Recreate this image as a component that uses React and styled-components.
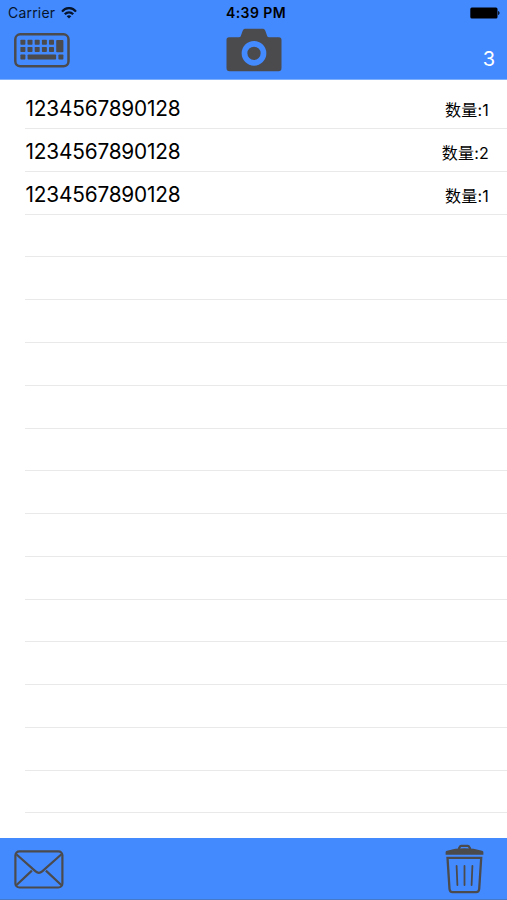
import React from "react";
import styled, { createGlobalStyle } from "styled-components";

const INK = "#4b4b4d";
const BLUE = "#448aff";

const GlobalStyle = createGlobalStyle`
  * { box-sizing: border-box; }
  body { margin: 0; background: #fff; }
`;

const Screen = styled.div`
  display: flex;
  flex-direction: column;
  width: 507px;
  height: 900px;
  overflow: hidden;
  background: #fff;
  font-family: Inter, "Noto Sans CJK SC", sans-serif;
  color: #000;
`;

const Header = styled.header`
  flex: none;
  height: 80px;
  background: ${BLUE};
  border-bottom: 1px solid #7fb0fb;
`;

const StatusBar = styled.div`
  display: grid;
  grid-template-columns: 1fr auto 1fr;
  align-items: center;
  height: 26px;
  padding: 0 7px 0 8px;
  line-height: 26px;
`;

const Carrier = styled.div`
  display: flex;
  align-items: center;
  gap: 6px;
  font-size: 14px;
  letter-spacing: 0.2px;
  color: #06152c;
`;

const Clock = styled.div`
  font-size: 14px;
  font-weight: 600;
  letter-spacing: 0.4px;
  padding-left: 4px;
`;

const Battery = styled.svg`
  justify-self: end;
`;

const Toolbar = styled.div`
  display: grid;
  grid-template-columns: 1fr auto 1fr;
  align-items: start;
  height: 53px;
  padding: 0 12px 0 14px;
`;

const IconButton = styled.button`
  display: flex;
  justify-self: start;
  margin: ${(p) => p.$top}px 0 0;
  padding: 0;
  border: 0;
  background: none;
  color: ${INK};
`;

const CameraButton = styled(IconButton)`
  margin-left: -2px;
`;

const Total = styled.div`
  justify-self: end;
  margin-top: 21px;
  font-size: 20px;
  line-height: 24px;
  color: #fff;
`;

const List = styled.ul`
  flex: 1;
  min-height: 0;
  margin: 0;
  padding: 6.4px 0 0 25px;
  list-style: none;
  overflow: hidden;
`;

const Row = styled.li`
  display: flex;
  align-items: center;
  justify-content: space-between;
  height: 42.77px;
  padding: 4px 18px 0 0.5px;
  border-bottom: 1px solid #e9e9ea;
`;

const Code = styled.span`
  font-size: 20.8px;
  line-height: 24px;
  letter-spacing: -0.18px;
`;

const Quantity = styled.span`
  font-size: 16px;
  line-height: 24px;
  padding-top: 2px;
  letter-spacing: 0.2px;
`;

const Footer = styled.footer`
  display: flex;
  flex: none;
  align-items: flex-start;
  justify-content: space-between;
  height: 62px;
  padding: 0 23px 0 14px;
  background: ${BLUE};
  border-bottom: 1px solid #4779c9;
`;

const items = [
  { code: "1234567890128", quantity: 1 },
  { code: "1234567890128", quantity: 2 },
  { code: "1234567890128", quantity: 1 },
];

const emptyRows = Array.from({ length: 14 }, (_, i) => i);

const keyRows = [6.7, 13.9];
const keyColumns = [6.4, 13.5, 20.7, 27.9, 35];

function WifiIcon() {
  return (
    <svg width="16" height="12" viewBox="0 0 16 12" fill="none" stroke="#06152c" strokeWidth="2.2">
      <path d="M1 4.6C5-.1 11-.1 15 4.6" />
      <path d="M3.8 7.3c2.4-2.7 6-2.7 8.4 0" />
      <path d="M8 11.6 5.7 9.3c1.3-1.3 3.3-1.3 4.6 0Z" fill="#06152c" stroke="none" />
    </svg>
  );
}

function KeyboardIcon() {
  return (
    <svg width="56" height="35" viewBox="0 0 56 35" fill="currentColor">
      <rect x="1.3" y="1.3" width="53.2" height="32" rx="5" fill="none" stroke="currentColor" strokeWidth="2.5" />
      {keyRows.map((y) =>
        keyColumns.map((x) => <rect key={`${x}-${y}`} x={x} y={y} width="5" height="5" rx="0.7" />)
      )}
      <rect x="42.2" y="7" width="7.2" height="12.3" rx="0.8" />
      <rect x="6.4" y="21.5" width="5" height="5" rx="0.7" />
      <rect x="13.6" y="21.5" width="28.5" height="5" rx="0.7" />
      <rect x="44.4" y="21.5" width="5" height="5" rx="0.7" />
    </svg>
  );
}

function CameraIcon() {
  return (
    <svg width="56" height="44" viewBox="0 0 56 44" fill="currentColor">
      <path d="M3 9.3h10.2c1 0 1.4-.6 1.8-1.7l1.4-4.2C17.2 1.2 18.1.7 20 .7h16c1.9 0 2.8.5 3.6 2.7L41 7.6c.4 1.1.8 1.7 1.8 1.7H53c1.7 0 2.5.9 2.5 2.5V40c0 2.1-1 3.2-3 3.2h-49c-2 0-3-1.1-3-3.2V11.8c0-1.6.8-2.5 2.5-2.5Z" />
      <circle cx="28" cy="25.3" r="9.5" fill="none" stroke={BLUE} strokeWidth="5.7" />
    </svg>
  );
}

function MailIcon() {
  return (
    <svg width="50" height="39" viewBox="0 0 50 39" fill="none" stroke="currentColor" strokeWidth="2.2" strokeLinejoin="round">
      <rect x="1.4" y="1.3" width="47" height="36.2" rx="4" />
      <path d="m2.3 4.2 19.3 17.2c2.4 2.1 4.2 2.1 6.6 0L47.5 4.2M2.3 35.3l15.6-14.7M47.5 35.3 31.9 20.6" />
    </svg>
  );
}

function TrashIcon() {
  return (
    <svg width="39" height="50" viewBox="0 0 39 50" fill="none" stroke="currentColor" strokeLinecap="round" strokeLinejoin="round">
      <path d="M14 4.5 14.7 3c.3-.7.8-1.1 1.5-1.1h6.6c.7 0 1.2.4 1.5 1.1l.7 1.5" strokeWidth="2.3" />
      <path d="M.6 10.7V8.4c0-1 .5-1.5 1.4-1.7C12.5 3.4 26.5 3.4 37 6.7c.9.2 1.4.7 1.4 1.7v2.3Z" fill="currentColor" stroke="none" />
      <path d="M2.5 13.8h33.7l-2 31.2c-.2 2.2-1 3.2-3 3.2H7.5c-2 0-2.8-1-3-3.2Z" strokeWidth="2.3" strokeLinejoin="miter" />
      <path d="m11.6 22 .8 19M19.5 22v19M27.4 22l-.8 19" strokeWidth="1.8" />
    </svg>
  );
}

export default function App() {
  return (
    <Screen>
      <GlobalStyle />
      <Header>
        <StatusBar>
          <Carrier>
            Carrier
            <WifiIcon />
          </Carrier>
          <Clock>4:39 PM</Clock>
          <Battery width="30" height="12" viewBox="0 0 30 12">
            <rect x="0.3" y="0.5" width="27.2" height="11" rx="1.5" />
            <path d="M28.2 4c1.7.3 1.7 3.7 0 4Z" />
          </Battery>
        </StatusBar>
        <Toolbar>
          <IconButton $top={7} aria-label="Keyboard"><KeyboardIcon /></IconButton>
          <CameraButton $top={2} aria-label="Camera"><CameraIcon /></CameraButton>
          <Total>3</Total>
        </Toolbar>
      </Header>
      <List>
        {items.map((item, index) => (
          <Row key={index}>
            <Code>{item.code}</Code>
            <Quantity>数量:{item.quantity}</Quantity>
          </Row>
        ))}
        {emptyRows.map((index) => <Row key={`empty-${index}`} />)}
      </List>
      <Footer>
        <IconButton $top={12} aria-label="Mail"><MailIcon /></IconButton>
        <IconButton $top={6} aria-label="Delete"><TrashIcon /></IconButton>
      </Footer>
    </Screen>
  );
}
